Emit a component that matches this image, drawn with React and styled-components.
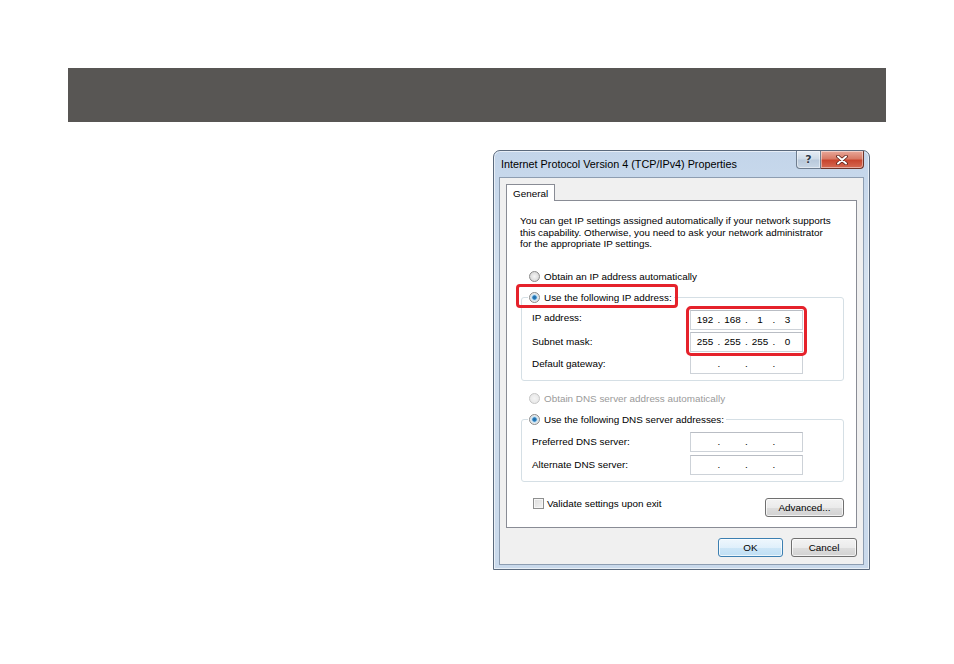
import React from "react";
import styled, { createGlobalStyle } from "styled-components";

const GlobalStyle = createGlobalStyle`
  body {
    margin: 0;
    background: #ffffff;
    font-family: "Liberation Sans", Arial, sans-serif;
  }
`;

const Page = styled.div`
  width: 954px;
  height: 664px;
  padding-top: 68px;
  box-sizing: border-box;
`;

const Banner = styled.div`
  margin: 0 68px;
  height: 54px;
  background: #585654;
`;

const Window = styled.div`
  margin: 28px 0 0 493px;
  width: 377px;
  height: 420px;
  box-sizing: border-box;
  display: flex;
  flex-direction: column;
  padding: 0 5px 4px 5px;
  border: 1px solid #5b6a7d;
  border-radius: 7px 7px 0 0;
  background: linear-gradient(180deg, #c3d5ea 0%, #d4e1ef 30%, #c9d9eb 100%);
  box-shadow: inset 0 0 0 1px rgba(255, 255, 255, 0.6);
  overflow: hidden;
`;

const TitleBar = styled.div`
  flex-shrink: 0;
  height: 26px;
  display: flex;
  justify-content: space-between;
  align-items: flex-start;
`;

const Title = styled.div`
  padding: 7px 0 0 2px;
  font-size: 10.8px;
  color: #000;
  white-space: nowrap;
`;

const Captions = styled.div`
  display: flex;
`;

const CaptionButton = styled.div`
  width: ${(p) => (p.$close ? "43px" : "25px")};
  height: 18px;
  box-sizing: border-box;
  display: flex;
  align-items: center;
  justify-content: center;
  border: 1px solid ${(p) => (p.$close ? "#6d3328" : "#6e7d8f")};
  border-top: none;
  border-left: ${(p) => (p.$close ? "none" : undefined)};
  border-radius: ${(p) => (p.$close ? "0 0 4px 0" : "0 0 0 4px")};
  background: ${(p) =>
    p.$close
      ? "linear-gradient(180deg, #e8a89a 0%, #d87a66 45%, #c8452e 55%, #d66a52 100%)"
      : "linear-gradient(180deg, #e6edf5 0%, #cfdbe8 45%, #b9c9db 55%, #c9d7e6 100%)"};
  box-shadow: inset 0 0 0 1px rgba(255, 255, 255, 0.45);
  font-family: "DejaVu Sans", sans-serif;
  font-weight: bold;
  font-size: 11px;
  color: #2f3a47;
  text-shadow: 0 0 2px #ffffff;
`;

const Client = styled.div`
  flex: 1;
  min-height: 0;
  display: flex;
  flex-direction: column;
  padding: 6px 6px 7px 6px;
  background: #f0f0f0;
  border: 1px solid #8d9db1;
  font-size: 9.9px;
  color: #000;
`;

const TabStrip = styled.div`
  display: flex;
  margin-bottom: -1px;
  position: relative;
  z-index: 1;
`;

const Tab = styled.div`
  height: 17px;
  box-sizing: border-box;
  padding: 0 6px;
  display: flex;
  align-items: center;
  background: #ffffff;
  border: 1px solid #898c95;
  border-bottom: none;
`;

const TabPanel = styled.div`
  flex: 1;
  min-height: 0;
  display: flex;
  flex-direction: column;
  background: #ffffff;
  border: 1px solid #898c95;
  padding: 14px 12px 0 13px;
`;

const Intro = styled.p`
  margin: 0;
  line-height: 11.6px;
`;

const OptionRow = styled.label`
  display: flex;
  align-items: center;
  gap: 4px;
  height: 13px;
  margin: ${(p) => p.$margin || "0"};
  padding-left: 9px;
  color: ${(p) => (p.$disabled ? "#9a9a9a" : "#000")};
`;

const Radio = styled.span`
  width: 11px;
  height: 11px;
  flex-shrink: 0;
  box-sizing: border-box;
  border-radius: 50%;
  border: 1px solid ${(p) => (p.$disabled ? "#c5c5c5" : "#8a8a8a")};
  background: ${(p) =>
    p.$checked
      ? "radial-gradient(circle, #1f6aa5 0, #2a7dbd 1.8px, #bfe0f5 2.6px, #e9e9e9 4px)"
      : p.$disabled
      ? "radial-gradient(circle, #f4f4f4 0, #e8e8e8 5px)"
      : "radial-gradient(circle, #f6f6f6 0, #d7d7d7 5px)"};
`;

const Group = styled.fieldset`
  margin: ${(p) => p.$margin || "0"} 0 0 1px;
  padding: 0 6px 6px 10px;
  border: 1px solid #d5dfe5;
  border-radius: 3px;
  min-width: 0;
`;

const Legend = styled.legend`
  position: relative;
  margin-left: -4px;
  padding: 0 2px 0 1px;
  display: flex;
  align-items: center;
  gap: 4px;
  height: 13px;

  ${(p) =>
    p.$marked &&
    `
    &::before {
      content: "";
      position: absolute;
      top: -7px;
      bottom: -4px;
      left: -12px;
      right: -4px;
      border: 3px solid #e5222b;
      border-radius: 4px;
      pointer-events: none;
    }
  `}
`;

const FieldGrid = styled.div`
  display: grid;
  grid-template-columns: 158px 113px;
  grid-auto-rows: 20px;
  row-gap: ${(p) => p.$gap || "2px"};
  margin-top: ${(p) => p.$top || "6px"};
`;

const FieldLabel = styled.div`
  grid-column: 1;
  grid-row: ${(p) => p.$row};
  align-self: center;
  margin-top: ${(p) => p.$shift || "0"};
`;

const IpBox = styled.div`
  grid-column: 2;
  grid-row: ${(p) => p.$row};
  box-sizing: border-box;
  display: flex;
  align-items: center;
  padding-left: 3px;
  border: 1px solid #cdd2d8;
  border-top-color: #b9bdc4;
  background: #ffffff;
`;

const Octet = styled.span`
  width: 22px;
  text-align: center;
`;

const Dot = styled.span`
  width: 5.5px;
  text-align: center;
`;

const IpMark = styled.div`
  grid-column: 2;
  grid-row: 1 / span 2;
  margin: -4px;
  border: 3px solid #e5222b;
  border-radius: 5px;
  pointer-events: none;
  z-index: 2;
`;

const BottomRow = styled.div`
  display: flex;
  justify-content: space-between;
  align-items: flex-start;
  margin-top: 16px;
  padding-left: 13px;
`;

const CheckRow = styled.label`
  display: flex;
  align-items: center;
  gap: 3px;
  height: 12px;
`;

const Checkbox = styled.span`
  width: 11px;
  height: 11px;
  box-sizing: border-box;
  border: 1px solid #8e8f8f;
  background: linear-gradient(135deg, #dcdcdc 0%, #f4f4f4 100%);
  box-shadow: inset 0 0 0 1px #f6f6f6;
`;

const Button = styled.button`
  width: ${(p) => p.$width || "65px"};
  height: 19px;
  padding: 0;
  font-family: inherit;
  font-size: 9.9px;
  color: #000;
  border-radius: 3px;
  border: 1px solid ${(p) => (p.$default ? "#3c7fb1" : "#707070")};
  background: ${(p) =>
    p.$default
      ? "linear-gradient(180deg, #eef7fd 0%, #e0f0fb 50%, #cde6f7 51%, #bfdff4 100%)"
      : "linear-gradient(180deg, #f3f3f3 0%, #ebebeb 50%, #dddddd 51%, #d2d2d2 100%)"};
  box-shadow: inset 0 0 0 1px rgba(255, 255, 255, 0.7);
`;

const ButtonRow = styled.div`
  flex-shrink: 0;
  display: flex;
  justify-content: flex-end;
  gap: 8px;
  margin-top: 10px;
`;

const Ip = ({ parts = ["", "", "", ""] }) => (
  <>
    <Octet>{parts[0]}</Octet>
    <Dot>.</Dot>
    <Octet>{parts[1]}</Octet>
    <Dot>.</Dot>
    <Octet>{parts[2]}</Octet>
    <Dot>.</Dot>
    <Octet>{parts[3]}</Octet>
  </>
);

const CloseGlyph = () => (
  <svg width="14" height="10" viewBox="0 0 14 10">
    <path d="M3 1.5 L11 8.5 M11 1.5 L3 8.5" stroke="#5a1f16" strokeWidth="3.6" strokeLinecap="round" />
    <path d="M3 1.5 L11 8.5 M11 1.5 L3 8.5" stroke="#ffffff" strokeWidth="2" strokeLinecap="round" />
  </svg>
);

export default function App() {
  return (
    <Page>
      <GlobalStyle />
      <Banner />
      <Window>
        <TitleBar>
          <Title>Internet Protocol Version 4 (TCP/IPv4) Properties</Title>
          <Captions>
            <CaptionButton>?</CaptionButton>
            <CaptionButton $close>
              <CloseGlyph />
            </CaptionButton>
          </Captions>
        </TitleBar>
        <Client>
          <TabStrip>
            <Tab>General</Tab>
          </TabStrip>
          <TabPanel>
            <Intro>
              You can get IP settings assigned automatically if your network supports
              <br />
              this capability. Otherwise, you need to ask your network administrator
              <br />
              for the appropriate IP settings.
            </Intro>

            <OptionRow $margin="20px 0 0 0">
              <Radio />
              Obtain an IP address automatically
            </OptionRow>

            <Group $margin="8px">
              <Legend $marked>
                <Radio $checked />
                Use the following IP address:
              </Legend>
              <FieldGrid $top="6px">
                <FieldLabel $row={1} $shift="-4px">IP address:</FieldLabel>
                <IpBox $row={1}>
                  <Ip parts={["192", "168", "1", "3"]} />
                </IpBox>
                <FieldLabel $row={2}>Subnet mask:</FieldLabel>
                <IpBox $row={2}>
                  <Ip parts={["255", "255", "255", "0"]} />
                </IpBox>
                <FieldLabel $row={3}>Default gateway:</FieldLabel>
                <IpBox $row={3}>
                  <Ip />
                </IpBox>
                <IpMark />
              </FieldGrid>
            </Group>

            <OptionRow $disabled $margin="11px 0 0 0">
              <Radio $disabled />
              Obtain DNS server address automatically
            </OptionRow>

            <Group $margin="8px">
              <Legend>
                <Radio $checked />
                Use the following DNS server addresses:
              </Legend>
              <FieldGrid $top="6px" $gap="3px">
                <FieldLabel $row={1}>Preferred DNS server:</FieldLabel>
                <IpBox $row={1}>
                  <Ip />
                </IpBox>
                <FieldLabel $row={2}>Alternate DNS server:</FieldLabel>
                <IpBox $row={2}>
                  <Ip />
                </IpBox>
              </FieldGrid>
            </Group>

            <BottomRow>
              <CheckRow>
                <Checkbox />
                Validate settings upon exit
              </CheckRow>
              <Button $width="79px">Advanced...</Button>
            </BottomRow>
          </TabPanel>
          <ButtonRow>
            <Button $default $width="65px">OK</Button>
            <Button $width="66px">Cancel</Button>
          </ButtonRow>
        </Client>
      </Window>
    </Page>
  );
}
